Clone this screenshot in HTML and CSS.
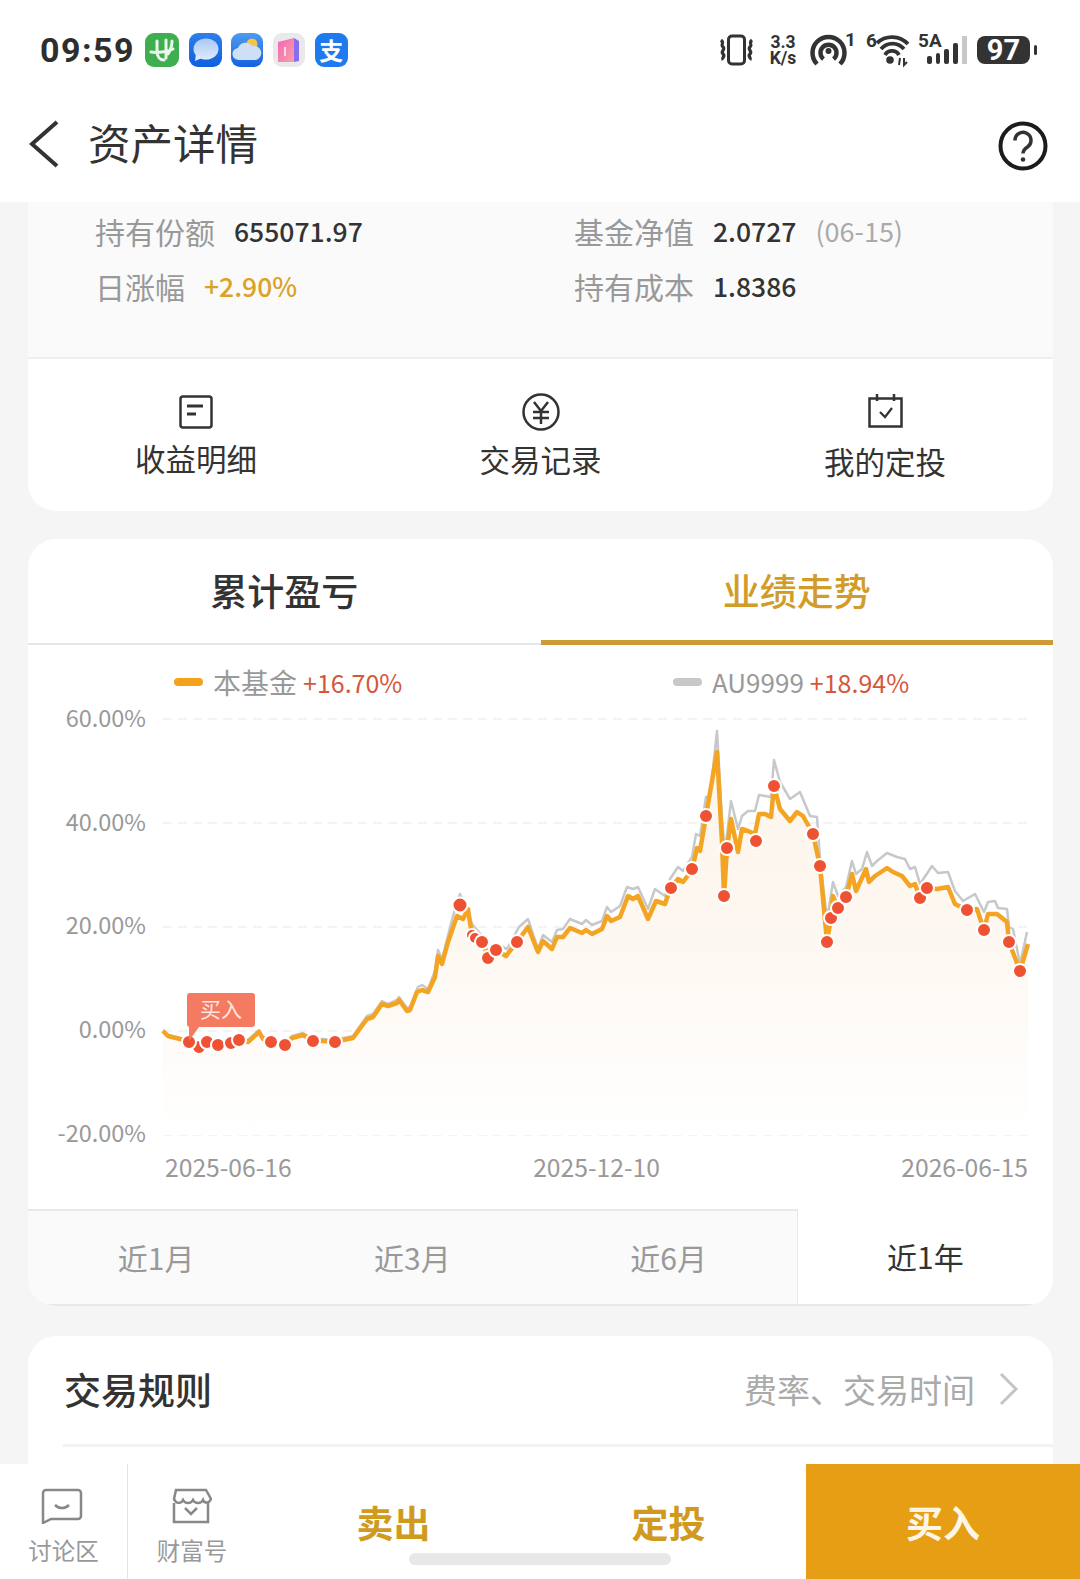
FILE: index.html
```html
<!DOCTYPE html>
<html>
<head>
    <meta charset="utf-8">
    <link rel="stylesheet" href="styles.css">
</head>
<body>
<div class="screen">
    <div class="status-bar">
        <span class="time">09:59</span>
        <div class="app-icons">
            <svg class="app-icon" width="34" height="34" viewBox="0 0 34 34"><rect width="34" height="34" rx="9" fill="#3fae4f"/><path d="M6 19c6 1 16 0 22-3M12 8v10c0 6 3 9 7 9M21 7v18M27 8c0 6-2 10-4 13" fill="none" stroke="#eaf8ec" stroke-width="3" stroke-linecap="round"/></svg>
            <svg class="app-icon" width="33" height="34" viewBox="0 0 33 34"><defs><linearGradient id="msgBg" x1="0" y1="0" x2="0" y2="1"><stop offset="0" stop-color="#2e7fe8"/><stop offset="1" stop-color="#0f5fe0"/></linearGradient><linearGradient id="msgFg" x1="0" y1="0" x2="0" y2="1"><stop offset="0" stop-color="#a9c9f6"/><stop offset="1" stop-color="#dfe9fb"/></linearGradient></defs><rect width="33" height="34" rx="9" fill="url(#msgBg)"/><ellipse cx="17" cy="16" rx="12.500" ry="10.500" fill="url(#msgFg)"/><path d="M7 21l-1 7 7-3z" fill="#dfe9fb"/></svg>
            <svg class="app-icon" width="32" height="34" viewBox="0 0 32 34"><defs><linearGradient id="skyBg" x1="0" y1="0" x2="0" y2="1"><stop offset="0" stop-color="#4d9bf0"/><stop offset="1" stop-color="#1561df"/></linearGradient></defs><rect width="32" height="34" rx="9" fill="url(#skyBg)"/><circle cx="21" cy="11" r="5.500" fill="#f6c545"/><path d="M8 27a6 6 0 0 1-1-12 8 8 0 0 1 14-2 7 7 0 0 1 4 14z" fill="#cfdff5"/></svg>
            <svg class="app-icon" width="32" height="34" viewBox="0 0 32 34"><defs><linearGradient id="bookFg" x1="0" y1="0" x2="1" y2="1"><stop offset="0" stop-color="#f565b4"/><stop offset="1" stop-color="#f8a0a8"/></linearGradient></defs><rect width="32" height="34" rx="9" fill="#e9e9ec"/><path d="M5 9l16-4v24H5z" fill="url(#bookFg)"/><path d="M21 5l5 3v20l-5 1z" fill="#8a6cf0"/><rect x="11" y="14" width="2" height="9" fill="#f8dbe9"/></svg>
            <span class="alipay-icon">支</span>
        </div>
        <div class="status-right">
            <svg class="st-vibrate" width="37" height="32" viewBox="0 0 37 32"><rect x="10.500" y="2" width="16" height="28" rx="3.500" fill="none" stroke="#333" stroke-width="3"/><path d="M3 6c4 3-1 4 2 7s-3 4 0 7-2 3 0 6M34 6c-4 3 1 4-2 7s3 4 0 7 2 3 0 6" fill="none" stroke="#333" stroke-width="3.200"/></svg>
            <div class="net-speed">3.3<br>K/s</div>
            <svg class="st-hotspot" width="47" height="44" viewBox="0 -6 47 44"><path d="M7 30a16 16 0 1 1 23 0M13.500 25a8 8 0 1 1 10 0" fill="none" stroke="#333" stroke-width="4.500"/><circle cx="18.500" cy="17" r="3" fill="#333"/><text x="35" y="12" class="status-num">1</text></svg>
            <svg class="st-wifi" width="46" height="44" viewBox="0 -6 46 44"><text x="0" y="13" class="status-num">6</text><path d="M11 9a22 22 0 0 1 31 1M15 15a15 15 0 0 1 23 0M19 21a8 8 0 0 1 14 0" fill="none" stroke="#333" stroke-width="3.800"/><circle cx="24" cy="26" r="3.800" fill="#333"/><path d="M34 24l-1 7M38 24v7l3-3" fill="none" stroke="#333" stroke-width="2"/></svg>
            <svg class="st-signal" width="50" height="44" viewBox="0 -6 50 44"><text x="0" y="13" class="status-num">5A</text><rect x="9" y="22" width="5" height="8" rx="2" fill="#333"/><rect x="18" y="19" width="4" height="11" rx="2" fill="#333"/><rect x="26" y="15" width="5" height="15" rx="2" fill="#333"/><rect x="35" y="9" width="5" height="21" rx="2" fill="#333"/><rect x="44" y="2" width="5" height="28" fill="#c8c8c8"/></svg>
            <div class="battery"><span class="battery-level">97</span><span class="battery-nub"></span></div>
        </div>
    </div>

    <div class="nav-bar">
        <svg class="back-icon" width="30" height="48" viewBox="0 0 30 48"><path d="M28 2L3 24l25 22" fill="none" stroke="#333" stroke-width="4"/></svg>
        <span class="nav-title">资产详情</span>
        <svg class="help-icon" width="50" height="50" viewBox="0 0 50 50"><circle cx="25" cy="25" r="22.500" fill="none" stroke="#1c1c1c" stroke-width="4"/><path d="M17 19.500a8 8 0 1 1 12.500 6.500c-3 2-4.500 3.500-4.500 6.500" fill="none" stroke="#333" stroke-width="3.500"/><circle cx="25" cy="38.500" r="2.300" fill="#333"/></svg>
    </div>

    <div class="content">
        <div class="card asset-card">
            <div class="asset-info">
                <div class="info-row"><span class="info-label">持有份额</span><span class="info-value">655071.97</span></div>
                <div class="info-row"><span class="info-label">基金净值</span><span class="info-value">2.0727</span><span class="info-date">(06-15)</span></div>
                <div class="info-row"><span class="info-label">日涨幅</span><span class="info-value info-up">+2.90%</span></div>
                <div class="info-row"><span class="info-label">持有成本</span><span class="info-value">1.8386</span></div>
            </div>
            <div class="actions">
                <div class="action action-first">
                    <svg width="34" height="34" viewBox="0 0 34 34"><rect x="1.500" y="1.500" width="31" height="31" rx="2.500" fill="none" stroke="#333" stroke-width="2.500"/><path d="M8 11h16M8 19h9" stroke="#333" stroke-width="3"/></svg>
                    <span class="action-label">收益明细</span>
                </div>
                <div class="action action-mid">
                    <svg width="38" height="38" viewBox="0 0 38 38"><circle cx="19" cy="19" r="17.500" fill="none" stroke="#333" stroke-width="2.500"/><path d="M12 9l7 9 7-9M11 19h16M11 25h16M19 18v13" fill="none" stroke="#333" stroke-width="2.500"/></svg>
                    <span class="action-label">交易记录</span>
                </div>
                <div class="action action-last">
                    <svg width="35" height="35" viewBox="0 0 35 35"><path d="M1.500 5.500h32v28h-32zM9 1v7M26 1v7" fill="none" stroke="#333" stroke-width="2.500"/><path d="M12 19l5 5 7-9" fill="none" stroke="#333" stroke-width="2.200"/></svg>
                    <span class="action-label">我的定投</span>
                </div>
            </div>
        </div>

        <div class="card chart-card">
            <div class="tabs">
                <div class="tab">累计盈亏</div>
                <div class="tab tab-active">业绩走势</div>
            </div>
            <div class="legend">
                <div class="legend-item legend-first"><span class="legend-mark mark-fund"></span><span class="legend-name">本基金</span><span class="legend-value">+16.70%</span></div>
                <div class="legend-item"><span class="legend-mark mark-gold"></span><span class="legend-name legend-code">AU9999</span><span class="legend-value">+18.94%</span></div>
            </div>
            <svg class="chart" width="1024" height="450" viewBox="28 700 1024 450">
                <defs>
                    <linearGradient id="areaFill" gradientUnits="userSpaceOnUse" x1="0" y1="740" x2="0" y2="1136">
                        <stop offset="0" stop-color="#fdf5ec"/>
                        <stop offset="0.55" stop-color="#fdf8f2"/>
                        <stop offset="1" stop-color="#ffffff"/>
                    </linearGradient>
                </defs>
                <g class="grid-lines">
                    <line x1="163" y1="720" x2="1030" y2="720"/>
                    <line x1="163" y1="824" x2="1030" y2="824"/>
                    <line x1="163" y1="928" x2="1030" y2="928"/>
                    <line x1="163" y1="1032" x2="1030" y2="1032"/>
                    <line x1="163" y1="1136" x2="1030" y2="1136"/>
                </g>
                <g class="axis-labels">
                    <text x="146" y="728">60.00%</text>
                    <text x="146" y="832">40.00%</text>
                    <text x="146" y="935">20.00%</text>
                    <text x="146" y="1039">0.00%</text>
                    <text x="146" y="1143">-20.00%</text>
                </g>
                <polygon class="area" points="163,1032 168,1037 180,1040 189,1043 198,1048 207,1043 218,1046 231,1044 239,1041 248,1043 259,1033 263,1040 271,1043 285,1046 292,1039 303,1036 313,1042 323,1042 335,1043 343,1041 353,1039 367,1020 373,1018 382,1005 388,1007 397,1004 399,1001 407,1012 410,1011 417,993 422,991 428,993 435,978 438,957 442,965 448,943 457,917 463,920 468,910 471,930 482,943 488,958 496,951 506,957 517,943 528,928 538,953 543,942 552,950 557,938 563,938 570,929 582,934 586,931 592,935 602,930 607,917 611,922 620,918 628,897 633,900 638,897 648,920 656,902 665,905 670,890 678,880 683,883 692,871 697,849 700,852 706,817 717,753 722,843 724,897 727,849 731,820 738,853 742,830 748,832 755,835 759,815 765,815 771,818 774,787 780,810 790,822 797,813 803,817 813,835 820,867 827,943 831,919 833,897 838,909 846,898 852,875 856,892 866,870 869,883 875,877 887,869 893,873 902,877 910,887 915,885 920,899 927,889 937,890 948,888 955,905 967,911 977,910 984,931 988,915 997,915 1007,923 1009,943 1020,972 1028,945 1028,1136 163,1136"/>
                <polyline class="line-gold" points="163,1031 168,1036 180,1039 189,1041 198,1046 207,1041 218,1044 231,1042 239,1039 248,1041 259,1031 263,1038 271,1041 285,1044 292,1037 303,1034 313,1040 323,1040 335,1041 343,1039 353,1037 367,1017 373,1015 382,1002 388,1005 397,1001 399,998 407,1009 410,1008 418,988 422,986 428,990 435,972 438,951 442,960 453,917 460,895 468,913 472,925 482,937 488,952 496,945 507,950 519,928 528,920 538,950 543,936 552,943 557,931 563,930 570,920 582,925 586,921 592,926 602,922 607,908 611,913 620,907 627,888 633,890 638,888 648,910 655,890 665,897 670,880 678,868 683,872 692,858 696,835 700,837 706,798 710,797 717,732 722,820 725,853 731,802 738,830 742,817 748,812 755,812 759,796 771,798 774,761 780,783 790,800 800,793 810,817 817,818 820,860 827,920 833,883 838,897 846,888 852,862 856,875 862,870 867,853 872,867 877,862 887,854 897,858 905,860 910,870 915,868 920,885 932,867 938,874 948,873 955,892 963,902 975,895 984,913 988,903 995,902 998,909 1007,910 1009,928 1013,930 1020,965 1027,933"/>
                <polyline class="line-fund" points="163,1032 168,1037 180,1040 189,1043 198,1048 207,1043 218,1046 231,1044 239,1041 248,1043 259,1033 263,1040 271,1043 285,1046 292,1039 303,1036 313,1042 323,1042 335,1043 343,1041 353,1039 367,1020 373,1018 382,1005 388,1007 397,1004 399,1001 407,1012 410,1011 417,993 422,991 428,993 435,978 438,957 442,965 448,943 457,917 463,920 468,910 471,930 482,943 488,958 496,951 506,957 517,943 528,928 538,953 543,942 552,950 557,938 563,938 570,929 582,934 586,931 592,935 602,930 607,917 611,922 620,918 628,897 633,900 638,897 648,920 656,902 665,905 670,890 678,880 683,883 692,871 697,849 700,852 706,817 717,753 722,843 724,897 727,849 731,820 738,853 742,830 748,832 755,835 759,815 765,815 771,818 774,787 780,810 790,822 797,813 803,817 813,835 820,867 827,943 831,919 833,897 838,909 846,898 852,875 856,892 866,870 869,883 875,877 887,869 893,873 902,877 910,887 915,885 920,899 927,889 937,890 948,888 955,905 967,911 977,910 984,931 988,915 997,915 1007,923 1009,943 1020,972 1028,945"/>
                <g class="buy-dots">
                    <circle cx="199" cy="1048" r="7"/><circle cx="189" cy="1043" r="7"/><circle cx="207" cy="1043" r="7"/><circle cx="218" cy="1046" r="7"/><circle cx="231" cy="1044" r="7"/><circle cx="239" cy="1041" r="7"/><circle cx="271" cy="1043" r="7"/><circle cx="285" cy="1046" r="7"/><circle cx="313" cy="1042" r="7"/><circle cx="335" cy="1043" r="7"/>
                    <circle cx="460" cy="906" r="7.500"/><circle cx="472" cy="936" r="6"/><circle cx="475" cy="939" r="6"/><circle cx="488" cy="959" r="7"/><circle cx="482" cy="943" r="7"/><circle cx="496" cy="951" r="7"/><circle cx="517" cy="943" r="7"/>
                    <circle cx="671" cy="889" r="7"/><circle cx="692" cy="870" r="7"/><circle cx="706" cy="817" r="7"/><circle cx="724" cy="897" r="7"/><circle cx="727" cy="849" r="7"/><circle cx="756" cy="842" r="7"/><circle cx="774" cy="787" r="7"/><circle cx="811" cy="834" r="6"/><circle cx="813" cy="835" r="7"/><circle cx="820" cy="867" r="7"/><circle cx="827" cy="943" r="7"/><circle cx="831" cy="919" r="7"/><circle cx="838" cy="909" r="7"/><circle cx="846" cy="898" r="7"/><circle cx="920" cy="899" r="7"/><circle cx="927" cy="889" r="7"/><circle cx="967" cy="911" r="7"/><circle cx="984" cy="931" r="7"/><circle cx="1009" cy="943" r="7"/><circle cx="1020" cy="972" r="7"/>
                </g>
                <path class="buy-tag" d="M190 994h62a3 3 0 0 1 3 3v28a3 3 0 0 1-3 3h-53l-10 14v-14a3 3 0 0 1-2-3v-28a3 3 0 0 1 3-3z"/>
                <text class="buy-tag-text" x="221" y="1018">买入</text>
            </svg>
            <div class="date-axis"><span>2025-06-16</span><span>2025-12-10</span><span>2026-06-15</span></div>
            <div class="periods">
                <div class="period">近1月</div>
                <div class="period">近3月</div>
                <div class="period">近6月</div>
                <div class="period period-active">近1年</div>
            </div>
        </div>

        <div class="card rules-card">
            <div class="rules-head">
                <span class="rules-title">交易规则</span>
                <span class="rules-note">费率、交易时间</span>
                <svg width="20" height="34" viewBox="0 0 20 34"><path d="M2 2l15 15L2 32" fill="none" stroke="#c4c4c4" stroke-width="3"/></svg>
            </div>
            <div class="rules-line"></div>
        </div>
    </div>

    <div class="bottom-bar">
        <div class="bar-link">
            <svg width="42" height="36" viewBox="0 0 42 36"><path d="M5 2h32a3 3 0 0 1 3 3v23a3 3 0 0 1-3 3H10l-8 4V5a3 3 0 0 1 3-3z" fill="none" stroke="#888" stroke-width="2.500"/><path d="M14 17c4 4 10 4 14 0" fill="none" stroke="#888" stroke-width="2.500"/></svg>
            <span>讨论区</span>
        </div>
        <div class="bar-link">
            <svg width="42" height="36" viewBox="0 0 42 36"><path d="M6 2h30l5 9c-2 5-7 4-8 1-2 4-8 4-10 0-2 4-8 4-10 0-2 4-7 4-9-1z" fill="none" stroke="#888" stroke-width="2.500"/><path d="M4 15v19h34V15" fill="none" stroke="#888" stroke-width="2.500"/><path d="M15 20l6 6 6-6" fill="none" stroke="#888" stroke-width="2.500"/></svg>
            <span>财富号</span>
        </div>
        <div class="bar-action">卖出</div>
        <div class="bar-action">定投</div>
        <div class="bar-buy">买入</div>
    </div>
    <div class="home-indicator"></div>
</div>
</body>
</html>
```

FILE: styles.css
```css
* {
    box-sizing: border-box;
}
body {
    margin: 0;
    background: #f5f5f5;
    font-family: "Noto Sans CJK SC", "Noto Sans", sans-serif;
    color: #333;
}
.screen {
    position: relative;
    width: 1080px;
    height: 1579px;
    overflow: hidden;
}

/* status bar */
.status-bar {
    height: 100px;
    background: #fff;
    display: flex;
    align-items: center;
    padding: 0 43px 0 40px;
}
.time {
    font-family: Roboto, sans-serif;
    font-size: 34px;
    font-weight: 700;
    letter-spacing: 1.5px;
    color: #2e2e2e;
    width: 105px;
}
.app-icons {
    display: flex;
    gap: 9.700px;
    align-items: center;
}
.alipay-icon {
    width: 33px;
    height: 34px;
    border-radius: 9px;
    background: #1f7af0;
    color: #fff;
    font-size: 24px;
    font-weight: 700;
    line-height: 33px;
    text-align: center;
}
.status-right {
    margin-left: auto;
    display: flex;
    align-items: center;
}
.net-speed {
    width: 30px;
    margin-left: 13px;
    font-family: Roboto, sans-serif;
    font-size: 17.500px;
    font-weight: 700;
    line-height: 16px;
    text-align: center;
    color: #333;
}
.st-hotspot {
    margin-left: 12px;
}
.st-wifi {
    margin-left: 9px;
}
.st-signal {
    margin-left: 6px;
}
.status-num {
    font-family: Roboto, sans-serif;
    font-size: 19px;
    font-weight: 700;
    fill: #333;
}
.battery {
    display: flex;
    align-items: center;
    gap: 4px;
    margin-left: 9px;
}
.battery-level {
    width: 53px;
    height: 28px;
    border-radius: 8px;
    background: #333;
    color: #fff;
    font-family: Roboto, sans-serif;
    font-size: 29px;
    font-weight: 700;
    line-height: 28px;
    text-align: center;
}
.battery-nub {
    width: 3px;
    height: 10px;
    border-radius: 2px;
    background: #333;
}

/* nav */
.nav-bar {
    height: 102px;
    background: #fff;
    display: flex;
    align-items: center;
    padding: 0 32px 15px 29px;
}
.nav-title {
    font-size: 42.500px;
    margin: 0 0 4px 29px;
    color: #333;
}
.help-icon {
    margin: 4px 0 0 auto;
}

.content {
    padding: 0 27px 0 28px;
    display: flex;
    flex-direction: column;
}
.card {
    background: #fff;
    border-radius: 28px;
    overflow: hidden;
}

/* asset card */
.asset-card {
    border-radius: 0 0 28px 28px;
}
.asset-info {
    height: 157px;
    background: #fafafa;
    border-bottom: 2px solid #eee;
    display: grid;
    grid-template-columns: 479px 1fr;
    grid-auto-rows: 55px;
    padding: 1px 0 0 67px;
}
.info-row {
    display: flex;
    align-items: center;
    gap: 19px;
}
.info-label {
    font-size: 30px;
    color: #999;
}
.info-value {
    font-size: 26.500px;
    font-weight: 500;
    color: #333;
}
.info-up {
    color: #dba227;
}
.info-date {
    font-size: 27px;
    color: #aaa;
}
.actions {
    height: 152px;
    display: flex;
    justify-content: space-between;
    padding: 34px 107px 0 107px;
}
.action {
    width: 122px;
    display: flex;
    flex-direction: column;
    align-items: center;
    gap: 8px;
}
.action-label {
    font-size: 30.500px;
    line-height: 44px;
    color: #333;
    white-space: nowrap;
}
.action-first svg {
    margin: 2px 0 -1px;
}
.action-mid .action-label {
    margin-top: -2px;
}
.action-last .action-label {
    margin-top: 3px;
}

/* chart card */
.chart-card {
    margin-top: 28px;
}
.tabs {
    display: flex;
    height: 106px;
}
.tab {
    flex: 1;
    font-size: 37px;
    font-weight: 500;
    line-height: 102px;
    text-align: center;
    color: #333;
    border-bottom: 2px solid #e6e6e6;
}
.tab-active {
    color: #d19c2a;
    border-bottom: 5px solid #cd9a35;
}
.legend {
    display: flex;
    height: 54px;
    padding: 20px 0 0 146px;
    line-height: 34px;
}
.legend-item {
    display: flex;
    align-items: center;
}
.legend-first {
    width: 499px;
}
.legend-mark {
    width: 29px;
    height: 8px;
    border-radius: 4px;
    margin-right: 10px;
}
.mark-fund {
    background: #f4a21e;
}
.mark-gold {
    background: #c8c8c8;
}
.legend-name {
    font-size: 28px;
    color: #999;
}
.legend-code {
    font-size: 26px;
}
.legend-value {
    font-size: 25px;
    color: #d5573b;
    margin-left: 6px;
}
.chart {
    display: block;
}
.grid-lines line {
    stroke: #f1f1f1;
    stroke-width: 1.500;
    stroke-dasharray: 9 6;
}
.axis-labels text {
    font-size: 23.500px;
    fill: #999;
    text-anchor: end;
}
.area {
    fill: url(#areaFill);
}
.line-gold {
    fill: none;
    stroke: #c6c8cc;
    stroke-width: 2.500;
    stroke-linejoin: round;
}
.line-fund {
    fill: none;
    stroke: #f4a423;
    stroke-width: 4.500;
    stroke-linejoin: round;
}
.buy-dots circle {
    fill: #ee5233;
    stroke: #fff;
    stroke-width: 2;
}
.buy-tag {
    fill: #f47a62;
}
.buy-tag-text {
    font-size: 21px;
    fill: #fde6df;
    text-anchor: middle;
}
.date-axis {
    display: flex;
    justify-content: space-between;
    height: 60px;
    padding: 0 25px 0 137px;
    font-size: 24.700px;
    line-height: 34px;
    color: #999;
}
.periods {
    display: grid;
    grid-template-columns: repeat(4, 1fr);
    height: 97px;
}
.period {
    background: #fafafa;
    border-top: 2px solid #e8e8e8;
    border-bottom: 2px solid #e8e8e8;
    font-size: 30px;
    line-height: 92px;
    text-align: center;
    color: #999;
}
.period-active {
    background: #fff;
    border-top: none;
    border-left: 1px solid #e8e8e8;
    line-height: 94px;
    color: #333;
}

/* rules */
.rules-card {
    margin-top: 30px;
    height: 240px;
}
.rules-head {
    height: 108px;
    display: flex;
    align-items: center;
    padding: 0 34px 2px 36px;
}
.rules-title {
    font-size: 37px;
    font-weight: 500;
    color: #333;
}
.rules-note {
    margin-left: auto;
    margin-right: 24px;
    font-size: 33px;
    color: #aaa;
}
.rules-line {
    height: 3px;
    margin-left: 35px;
    background: #f2f2f2;
}

/* bottom bar */
.bottom-bar {
    position: absolute;
    left: 0;
    right: 0;
    bottom: 0;
    height: 115px;
    background: #fff;
    display: flex;
}
.bar-link {
    width: 128px;
    display: flex;
    flex-direction: column;
    align-items: center;
    padding-top: 24px;
    gap: 9px;
    font-size: 23.500px;
    line-height: 34px;
    color: #999;
}
.bar-link svg {
    margin-right: 3px;
}
.bar-link:first-child {
    border-right: 1px solid #e4e4e4;
}
.bar-action {
    width: 275px;
    text-align: center;
    font-size: 37px;
    font-weight: 700;
    line-height: 116px;
    color: #d09a1f;
}
.bar-buy {
    width: 274px;
    background: #e69f14;
    text-align: center;
    font-size: 37px;
    font-weight: 700;
    line-height: 116px;
    color: #fdf6e6;
}
.home-indicator {
    position: absolute;
    left: 409px;
    top: 1553px;
    width: 262px;
    height: 12px;
    border-radius: 6px;
    background: #e8e8e8;
}
```
